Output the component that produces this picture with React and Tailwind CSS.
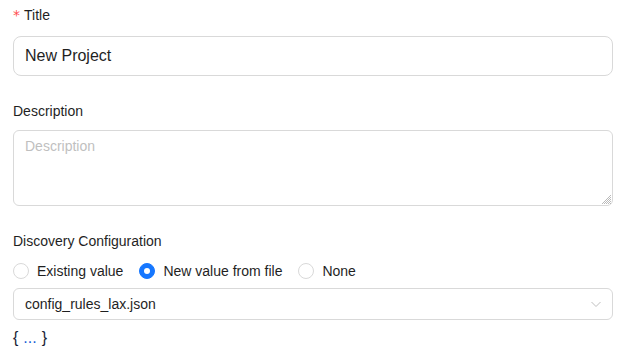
import React from "react";

function Radio({ checked, label }) {
  return (
    <label className="flex items-center mr-[8px] h-[22px]">
      {checked ? (
        <span className="w-[16px] h-[16px] rounded-full bg-[#1677ff] border border-[#1677ff] flex items-center justify-center">
          <span className="w-[6px] h-[6px] rounded-full bg-white" />
        </span>
      ) : (
        <span className="w-[16px] h-[16px] rounded-full bg-white border border-[#d9d9d9]" />
      )}
      <span className="px-[8px] text-[14px] leading-[22px] text-[#1f1f1f]">{label}</span>
    </label>
  );
}

export default function App() {
  return (
    <div
      className="w-[623px] h-[354px] bg-white overflow-hidden"
      style={{ fontFamily: '"Liberation Sans", Arial, sans-serif' }}
    >
      <div className="ml-[13px] w-[600px] pt-[4px]">
        <div className="h-[22px] flex items-center text-[14px] leading-[22px] text-[#1f1f1f]">
          <span className="text-[#ff4d4f] mr-[4px] text-[14px]" style={{ fontFamily: '"DejaVu Sans", sans-serif' }}>*</span>
          <span>Title</span>
        </div>
        <div className="mt-[10px] h-[40px] rounded-[8px] border border-[#d9d9d9] flex items-center px-[11px] text-[16px] text-[#1f1f1f]">
          New Project
        </div>

        <div className="mt-[24px] h-[22px] text-[14px] leading-[22px] text-[#1f1f1f]">Description</div>
        <div className="relative mt-[8px]">
          <textarea
            readOnly
            placeholder="Description"
            className="block w-[600px] h-[76px] rounded-[6px] border border-[#d9d9d9] px-[11px] py-[4px] text-[14px] leading-[22px] text-[#1f1f1f] placeholder:text-[#bfbfbf] outline-none resize-none"
            style={{ fontFamily: '"Liberation Sans", Arial, sans-serif' }}
          />
          <svg className="absolute right-[2px] bottom-[2px]" width="9" height="9" viewBox="0 0 9 9">
            <path d="M9 0L0 9M9 2L2 9M9 4L4 9M9 6L6 9M9 8L8 9" stroke="#a8a8a8" strokeWidth="0.8" />
          </svg>
        </div>

        <div className="mt-[24px] h-[22px] text-[14px] leading-[22px] text-[#1f1f1f]">Discovery Configuration</div>
        <div className="mt-[8px] flex items-center">
          <Radio label="Existing value" />
          <Radio checked label="New value from file" />
          <Radio label="None" />
        </div>
        <div className="mt-[6px] h-[32px] rounded-[6px] border border-[#d9d9d9] flex items-center justify-between pl-[11px] pr-[10px] text-[14px] text-[#1f1f1f]">
          <span>config_rules_lax.json</span>
          <svg width="12" height="12" viewBox="0 0 12 12" fill="none">
            <path d="M1.5 4L6 8.5L10.5 4" stroke="#bfbfbf" strokeWidth="1" />
          </svg>
        </div>
        <div className="mt-[6px] h-[24px] flex items-center text-[16px] text-[#1a1f36]">
          <span>{"{"}</span>
          <span className="mx-[5px] text-[#1a5fd6]">...</span>
          <span>{"}"}</span>
        </div>
      </div>
    </div>
  );
}
